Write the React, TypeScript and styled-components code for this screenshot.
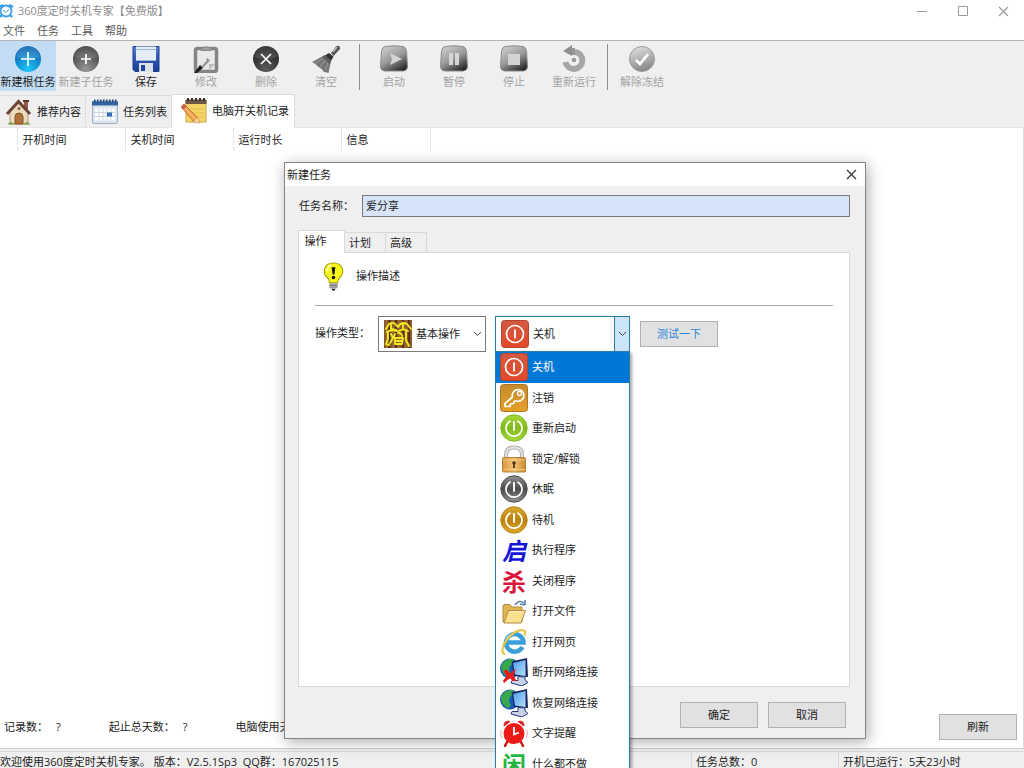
import React, { useState } from "react";
import styled, { createGlobalStyle, css } from "styled-components";

const GlobalStyle = createGlobalStyle`
  *, *::before, *::after { box-sizing: border-box; }
  body { margin: 0; background: #fff; }
  body, button, input, select {
    font-family: "Open Sans", "Noto Sans CJK SC", sans-serif;
    font-size: 11px;
    line-height: 18px;
    color: #1c1c1c;
  }
  button { padding: 0; border: 0; background: none; }
  svg { display: block; flex: none; }
`;

const Window = styled.div`
  position: relative;
  display: flex;
  flex-direction: column;
  height: 100vh;
  overflow: hidden;
  background: #fff;
`;

const TitleBar = styled.header`
  display: flex;
  align-items: center;
  justify-content: space-between;
  height: 22px;
`;

const AppTitle = styled.h1`
  display: flex;
  align-items: center;
  gap: 4px;
  margin: 0;
  font-size: 11px;
  font-weight: 400;
  color: #8c8c8c;
`;

const WindowButtons = styled.div`
  display: flex;
`;

const WindowButton = styled.button`
  display: grid;
  place-items: center;
  width: 41px;
  height: 22px;
`;

const MenuBar = styled.nav`
  display: flex;
  gap: 12px;
  height: 18px;
  padding-left: 3px;
`;

const MenuItem = styled.button`
  color: #5a5a5a;
`;

const Toolbar = styled.div`
  display: flex;
  height: 54px;
  border-top: 1px solid #b4b4b4;
  background: #efefef;
`;

const Tool = styled.button<{ $active?: boolean; $narrow?: boolean }>`
  display: flex;
  flex-direction: column;
  align-items: center;
  width: ${(p) => (p.$narrow ? 56 : 60)}px;
  height: 50px;
  padding-top: 4px;
  white-space: nowrap;
  background: ${(p) => (p.$active ? "#c1dcf3" : "transparent")};
  &:disabled { color: #a3a3a3; }
`;

const ToolDivider = styled.div`
  width: 1px;
  height: 46px;
  margin: 3px 4px 0 3px;
  background: #8f8f8f;
`;

const MainTabs = styled.div`
  display: flex;
  align-items: flex-end;
  height: 34px;
  background: #efefef;
  border-bottom: 1px solid #e6e6e6;
`;

const MainTab = styled.button<{ $active?: boolean }>`
  display: flex;
  align-items: center;
  gap: 4px;
  height: 32px;
  padding: 0 4px 0 5px;
  border-top: 1px solid #dcdcdc;
  border-right: 1px solid #dcdcdc;
  ${(p) =>
    p.$active &&
    css`
      height: 34px;
      margin-bottom: -1px;
      padding: 0 5px 2px 8px;
      background: #fff;
    `}
`;

const Records = styled.main`
  flex: 1;
  border-right: 1px solid #dcdcdc;
`;

const RecordTable = styled.table`
  border-collapse: collapse;
  table-layout: fixed;
  width: 430px;
  th {
    height: 23px;
    padding: 0 5px;
    border-right: 1px solid #e4e4e4;
    font-weight: 400;
    text-align: left;
  }
`;

const Summary = styled.footer`
  display: flex;
  align-items: center;
  height: 42px;
  padding: 0 6px 0 4px;
  border-right: 1px solid #dcdcdc;
`;

const Stat = styled.p`
  display: flex;
  gap: 8px;
  margin: 0 48px 0 0;
  white-space: nowrap;
`;

const PushButton = styled.button<{ $accent?: boolean }>`
  width: 78px;
  height: 26px;
  border: 1px solid #b1b1b1;
  background: #e1e1e1;
  color: ${(p) => (p.$accent ? "#2f86dc" : "#1c1c1c")};
`;

const RefreshButton = styled(PushButton)`
  margin-left: auto;
`;

const StatusBar = styled.div`
  display: grid;
  grid-template-columns: 691fr 147fr 186fr;
  height: 20px;
  border-top: 1px solid #cfcfcf;
  background: #efefef;
  white-space: nowrap;
`;

const StatusCell = styled.div`
  height: 24px;
  margin-top: 2px;
  padding: 1px 0 0 4px;
  border-top: 1px solid #dadada;
  border-left: 1px solid #dadada;
  &:first-child {
    padding-left: 0;
    border-left: 0;
  }
`;

const Dialog = styled.section`
  position: absolute;
  left: 284px;
  top: 162px;
  width: 582px;
  height: 577px;
  display: flex;
  flex-direction: column;
  border: 1px solid #858585;
  background: #efefef;
  box-shadow: 2px 3px 14px rgba(0, 0, 0, 0.32);
`;

const DialogTitle = styled.header`
  display: flex;
  align-items: center;
  justify-content: space-between;
  height: 23px;
  padding-left: 2px;
  background: #fff;
`;

const Caption = styled.h2`
  margin: 0;
  font-size: 11px;
  font-weight: 400;
`;

const DialogClose = styled.button`
  display: grid;
  place-items: center;
  width: 28px;
  height: 23px;
`;

const DialogBody = styled.div`
  display: flex;
  flex: 1;
  flex-direction: column;
  padding: 9px 15px 10px 13px;
`;

const NameRow = styled.div`
  display: flex;
  align-items: center;
  gap: 7px;
  padding-left: 1px;
  label { width: 56px; }
`;

const NameInput = styled.input`
  flex: 1;
  height: 22px;
  padding: 0 3px 2px;
  border: 1px solid #7a7a7a;
  border-radius: 0;
  background: #d7e4f7;
  outline: none;
`;

const DialogTabs = styled.div`
  display: flex;
  align-items: flex-end;
  height: 22px;
  margin-top: 13px;
`;

const DialogTab = styled.button<{ $active?: boolean }>`
  width: 41px;
  height: 20px;
  padding-right: 10px;
  border: solid #d9d9d9;
  border-width: 1px 1px 0 0;
  ${(p) =>
    p.$active &&
    css`
      position: relative;
      width: 47px;
      height: 23px;
      margin-bottom: -1px;
      padding: 0 12px 2px 0;
      border-left-width: 1px;
      background: #fff;
    `}
`;

const Panel = styled.div`
  flex: 1;
  padding: 9px 16px;
  border: 1px solid #d9d9d9;
  background: #fff;
`;

const Description = styled.div`
  display: flex;
  align-items: center;
  gap: 8px;
  height: 43px;
  padding: 0 0 15px 4px;
`;

const ActionRow = styled.div`
  display: flex;
  align-items: center;
  gap: 10px;
  padding-top: 10px;
  border-top: 1px solid #a5a5a5;
`;

const ActionLabel = styled.label`
  width: 53px;
  padding-bottom: 2px;
  white-space: nowrap;
`;

const Combo = styled.div<{ $open?: boolean }>`
  position: relative;
  display: flex;
  align-items: center;
  width: ${(p) => (p.$open ? 135 : 108)}px;
  height: 36px;
  padding-left: 5px;
  border: 1px solid ${(p) => (p.$open ? "#2b7da8" : "#7a7a7a")};
  background: #fff;
  & + & { margin-left: -1px; }
`;

const ComboSelect = styled.select`
  flex: 1;
  min-width: 0;
  height: 34px;
  padding: 0 0 0 4px;
  border: 0;
  background: transparent;
  appearance: none;
  outline: none;
`;

const ComboArrow = styled.span<{ $open?: boolean }>`
  display: grid;
  place-items: center;
  align-self: stretch;
  width: 15px;
  ${(p) => p.$open && "background: #cce4f7; border-left: 1px solid #2b7da8;"}
`;

const OptionList = styled.ul`
  position: absolute;
  z-index: 1;
  top: 34px;
  left: -1px;
  right: -1px;
  display: flex;
  flex-direction: column;
  height: 428px;
  margin: 0;
  padding: 0;
  border: 1px solid #2b7da8;
  border-bottom: 0;
  background: #fff;
  box-shadow: 2px 2px 3px rgba(0, 0, 0, 0.35);
  list-style: none;
`;

const Option = styled.li<{ $selected: boolean }>`
  display: flex;
  flex: 1;
  min-height: 0;
  align-items: center;
  gap: 4px;
  padding-left: 4px;
  white-space: nowrap;
  color: ${(p) => (p.$selected ? "#fff" : "#1c1c1c")};
  background: ${(p) => (p.$selected ? "#0078d7" : "transparent")};
`;

const GlyphIcon = styled.span<{ $color: string; $slanted?: boolean }>`
  width: 28px;
  font: 700 24px/26px "Noto Sans CJK SC", sans-serif;
  font-style: ${(p) => (p.$slanted ? "italic" : "normal")};
  text-align: center;
  color: ${(p) => p.$color};
`;

const DialogActions = styled.div`
  display: flex;
  justify-content: flex-end;
  gap: 10px;
  padding: 15px 4px 0 0;
`;

/* ---------- icons ---------- */

const Icon = ({ children, size = 28 }: { children: React.ReactNode; size?: number }) => (
  <svg width={size} height={size} viewBox="0 0 28 28" fill="none" aria-hidden="true">
    {children}
  </svg>
);

const Cross = ({ color }: { color: string }) => (
  <svg width="11" height="11" viewBox="0 0 11 11" aria-hidden="true">
    <path d="M1 1l9 9M10 1l-9 9" stroke={color} strokeWidth="1.2" />
  </svg>
);

const Chevron = () => (
  <svg width="9" height="6" viewBox="0 0 9 6" fill="none" aria-hidden="true">
    <path d="M1 1l3.5 3.5L8 1" stroke="#444" />
  </svg>
);

const AlarmLogo = () => (
  <svg width="14" height="16" viewBox="0 0 14 16" fill="none" aria-hidden="true">
    <path d="M0 4l3-2M9 2l4 2M2 12l-2 2M10 12l2 2" stroke="#2f9be8" strokeWidth="2.400" />
    <circle cx="6" cy="8" r="5.500" fill="#fff" stroke="#3ba2ea" strokeWidth="1.800" />
    <path d="M3 7l3 2.500L9 6" stroke="#4b9bd4" />
  </svg>
);

const RoundIcon = ({ id, from, to, mark }: { id: string; from: string; to: string; mark: string }) => (
  <Icon>
    <defs>
      <radialGradient id={id} cx=".5" cy=".9" r=".85">
        <stop stopColor={from} />
        <stop offset="1" stopColor={to} />
      </radialGradient>
    </defs>
    <circle cx="14" cy="14" r="13" fill={`url(#${id})`} />
    <path d="M2.500 12a11.500 11.500 0 0 1 23 0q-11.500 4-23 0z" fill="#fff" opacity=".13" />
    <path d={mark} stroke="#fff" strokeWidth="1.700" />
  </Icon>
);

const SaveIcon = () => (
  <Icon>
    <defs>
      <linearGradient id="save" x2="0" y2="1">
        <stop stopColor="#5a83d0" /><stop offset=".5" stopColor="#2c55b5" /><stop offset="1" stopColor="#1c3f93" />
      </linearGradient>
    </defs>
    <path d="M1 1.500h26v25H3l-2-2z" fill="url(#save)" stroke="#1d3f93" />
    <path d="M4 1.500h20V15H4z" fill="#e4edf5" />
    <path d="M4 4.500h20M4 15.500h20" stroke="#9fb6d0" />
    <path d="M7 18h14v9H7z" fill="#dde2e8" />
    <path d="M9 20h4v6H9z" fill="#1b459f" />
  </Icon>
);

const EditIcon = () => (
  <Icon>
    <rect x="3.500" y="3.500" width="21" height="23" rx="2" fill="#e9e9e9" stroke="#858585" strokeWidth="3.500" />
    <path d="M9 5.500V3h3q2-3 4 0h3v2.500z" fill="#a5a5a5" stroke="#858585" />
    <path d="M17 19h6l-6 6z" fill="#bbb" />
    <path d="M15.500 13l2.500 2.500-7 7.500-3-2.500z" fill="#999" />
    <path d="M14 15l-6 7" stroke="#f4f4f4" strokeWidth="1.300" />
    <path d="M8 20l3 3-6 5-3 0z" fill="#1c1c1c" />
  </Icon>
);

const BrushIcon = () => (
  <Icon>
    <path d="M19 8l5.500-7q4-1.500 3.500 3l-6.500 7z" fill="#555" />
    <path d="M25 2l-4 5" stroke="#bbb" strokeWidth="1.500" />
    <path d="M17 8l4.500 3.500L19 16l-7-5z" fill="#333" />
    <path d="M13 10l6 6-2.500 12q-3-1-4.500-1-3-4-6-5.500-2-2.500-6-4.500z" fill="#777" />
    <path d="M14 12L3 18M15 13L8 22M17 15l-4 11" stroke="#a0a0a0" strokeWidth=".8" />
    <path d="M13 10l6 6-1 3-8-7z" fill="#5b5b5b" />
  </Icon>
);

const MediaIcon = ({ mark }: { mark: string }) => (
  <Icon>
    <defs>
      <linearGradient id="media" x1=".2" x2=".8" y2="1">
        <stop stopColor="#cdcdcd" /><stop offset=".5" stopColor="#999" /><stop offset="1" stopColor="#222" />
      </linearGradient>
    </defs>
    <path d="M5 1.500q9-1.500 18 0 3 .5 3.500 5l1 15q0 4-4 4.500H4.500Q.500 25.500.500 21.500l1-15Q2 2 5 1.500z" fill="url(#media)" stroke="#8a8a8a" />
    <path d={mark} fill="#d4d4d4" />
  </Icon>
);

const RerunIcon = () => (
  <Icon>
    <path d="M15 7a8.500 8.500 0 1 1-9.500 10" stroke="#a6a6a6" strokeWidth="6" />
    <path d="M3 6l9-6v11z" fill="#8e8e8e" />
    <path d="M11 3h4v7h-4z" fill="#969696" />
    <circle cx="14" cy="15" r="2.300" fill="#999" />
  </Icon>
);

const ThawIcon = () => (
  <Icon>
    <defs>
      <linearGradient id="thaw" x2=".3" y2="1">
        <stop stopColor="#e6e6e6" /><stop offset="1" stopColor="#8b8b8b" />
      </linearGradient>
    </defs>
    <circle cx="14" cy="14" r="12.500" fill="url(#thaw)" stroke="#9a9a9a" />
    <path d="M8 15l4 4 8-10" stroke="#fff" strokeWidth="2.800" />
  </Icon>
);

const HomeIcon = () => (
  <Icon>
    <path d="M19 3h4v8h-4z" fill="#9c5a45" />
    <path d="M18 3h6" stroke="#5e3126" strokeWidth="2" />
    <path d="M5 14l8.500-9L23 14v12H5z" fill="#ecdcbf" stroke="#b59770" />
    <path d="M2 16L13.500 3.500 25 16" stroke="#6b4538" strokeWidth="3" />
    <path d="M10 26v-7a4 4 0 0 1 8 0v7z" fill="#b0703a" stroke="#80502a" />
    <circle cx="14" cy="10.500" r="1.500" fill="#8a5a45" />
    <path d="M3 26.500q3-4 6 0M19 26.500q3-4 6 0" fill="#7ea64f" stroke="#7ea64f" />
  </Icon>
);

const CalendarIcon = () => (
  <Icon>
    <rect x="1.500" y="3" width="25" height="22.500" rx="1.500" fill="#dce5ed" stroke="#9fb2c4" />
    <path d="M1 3.500h26v4H1z" fill="#31649e" />
    <path d="M3 3h23" stroke="#20497c" strokeWidth="3" strokeDasharray="1.500 1.500" />
    <path d="M4 10.500h20v12H4z" fill="#fff" />
    <path d="M4 14.500h20M4 18.500h20M8 10.500v12M12 10.500v12M16 10.500v12M20 10.500v12" stroke="#c8d5e1" />
    <path d="M16 14.500h5v4h-5z" fill="#356bb8" />
  </Icon>
);

const NoteIcon = () => (
  <Icon>
    <rect x="6" y="4" width="20" height="21" fill="#f3d566" stroke="#cda84b" />
    <path d="M5.500 2.500h21V7h-21z" fill="#6b5646" />
    <path d="M7 2.500h18" stroke="#3c332d" strokeWidth="3" strokeDasharray="2 2" />
    <path d="M9 12h15M9 16h15M9 20h15" stroke="#e3bf50" />
    <path d="M1 10l3-3 14 14 1.500 5-5.500-1z" fill="#f3a04a" stroke="#b06a30" strokeWidth=".7" />
    <path d="M1 10l3-3 2.500 2.500-3 3z" fill="#d55c54" />
    <path d="M15 23l3-2 1.500 5-5.500-1z" fill="#f2d4a5" />
    <path d="M5 11l10 11" stroke="#ffd38b" />
  </Icon>
);

const BulbIcon = () => (
  <Icon size={29}>
    <path d="M14 1C4 1 3.500 11 7.500 14.500q2.500 2 2.500 5.500h8q0-3.500 2.500-5.500C24.500 11 24 1 14 1z" fill="#f7f51a" stroke="#a0a000" />
    <path d="M8 9q0-5 4-6" stroke="#fffbc5" strokeWidth="1.500" />
    <path d="M12.200 5h3.600l-1 7h-1.600z" fill="#111" />
    <circle cx="14" cy="15" r="1.700" fill="#111" />
    <path d="M10 20.500h8V25h-8z" fill="#a5a5a5" />
    <path d="M10 22.500h8M11 25h6" stroke="#777" />
    <path d="M12.500 26h3v1.500h-3z" fill="#222" />
  </Icon>
);

const WoodIcon = () => (
  <Icon>
    <rect width="28" height="28" fill="#8a5a2c" />
    <path d="M5.500 0v28M12 0v28M19 0v28M25 0v28" stroke="#4c280f" strokeWidth="1.500" />
    <path d="M2.500 0v28M9 0v28M15 0v28M22 0v28" stroke="#a5713c" />
    <path
      d="M2 9l3-5q5-3 8 2M7 4v5l5 1M14 7q3-6 9-3l4 5M19 4v5M3 12q4-3 10-1M15 11q5-3 9 0M4 13v6l-2 5 3 1M7 14l2 4-3 5M22 12v8l3 6M11 14l-1 3M14 13q4 0 4 3M11 18h8l-1 6h-7zM11 21h7"
      stroke="#f0ea1f"
      strokeWidth="1.900"
      strokeLinecap="round"
      strokeLinejoin="round"
    />
  </Icon>
);

const ShutdownIcon = () => (
  <Icon>
    <defs>
      <linearGradient id="shutdown" x2="0" y2="1">
        <stop stopColor="#d25a42" /><stop offset="1" stopColor="#e2492a" />
      </linearGradient>
    </defs>
    <rect x=".5" y=".5" width="27" height="27" rx="3" fill="url(#shutdown)" stroke="#b5472f" />
    <circle cx="14" cy="14" r="8.500" stroke="#fff" strokeWidth="1.700" />
    <path d="M14 9.500v9" stroke="#fff" strokeWidth="1.800" />
  </Icon>
);

const KeyIcon = () => (
  <Icon>
    <defs>
      <linearGradient id="key" x2="0" y2="1">
        <stop stopColor="#c48a2d" /><stop offset="1" stopColor="#e6a028" />
      </linearGradient>
    </defs>
    <rect x=".5" y=".5" width="27" height="27" rx="3" fill="url(#key)" stroke="#b1761c" />
    <path d="M12.500 13a5.800 5.800 0 1 1 4 4l-2 0-1 2.500-3 .5-.5 2.500H5v-3z" stroke="#fff" strokeWidth="1.700" strokeLinejoin="round" />
    <circle cx="19.500" cy="9.500" r="2" stroke="#fff" strokeWidth="1.300" />
  </Icon>
);

const PowerIcon = ({ id, light, dark }: { id: string; light: string; dark: string }) => (
  <Icon>
    <defs>
      <linearGradient id={id} x2="0" y2="1">
        <stop stopColor={light} /><stop offset=".5" stopColor={dark} /><stop offset="1" stopColor={light} />
      </linearGradient>
    </defs>
    <circle cx="14" cy="14" r="13.200" fill={`url(#${id})`} stroke={dark} />
    <path d="M10 7.200a8 8 0 1 0 8 0" stroke="#fff" strokeWidth="1.700" strokeLinecap="round" />
    <path d="M14 8v8" stroke="#fff" strokeWidth="1.900" strokeLinecap="round" />
  </Icon>
);

const LockIcon = () => (
  <Icon>
    <defs>
      <linearGradient id="lock" x2="1">
        <stop stopColor="#d4953c" /><stop offset=".5" stopColor="#f5c678" /><stop offset="1" stopColor="#cc8a34" />
      </linearGradient>
    </defs>
    <path d="M6 15V9.500q0-7 8-7t8 7V15" stroke="#b0b0b0" strokeWidth="4" />
    <path d="M6 15V9.500q0-7 8-7t8 7V15" stroke="#e5e5e5" strokeWidth="1.800" />
    <rect x="2.500" y="12.500" width="23" height="14.500" rx="1" fill="url(#lock)" stroke="#b98138" />
    <path d="M3 15h22M3 24.500h22" stroke="#f1c77c" />
    <circle cx="14" cy="18" r="1.800" fill="#553619" />
    <path d="M13.300 18h1.400l.3 5h-2z" fill="#553619" />
  </Icon>
);

const FolderIcon = () => (
  <Icon>
    <path d="M3 9.500l1-2h6l2 2.500h10v15H3z" fill="#e1b651" stroke="#a8894f" />
    <path d="M8.500 13.500h17L21 26H4z" fill="#fbe08f" stroke="#b28a42" />
    <path d="M9.500 14.500h14" stroke="#fff1bd" />
    <path d="M15 8q4-6 9-2M25 8V3M25 8l-5-1" stroke="#5b7fa5" strokeWidth="1.500" />
  </Icon>
);

const BrowserIcon = () => (
  <Icon>
    <path d="M22.500 19a8.800 8.800 0 1 1 1-4.500H8" stroke="#3a9fd9" strokeWidth="4.500" />
    <path d="M6 12q2-6 8-6" stroke="#8fd2f3" strokeWidth="1.800" />
    <path d="M5 26.500c-9-4 8-28 19-24 2 1 1 4 0 5" stroke="#e8c64c" strokeWidth="2.200" />
  </Icon>
);

const NetworkIcon = ({ broken }: { broken?: boolean }) => (
  <Icon>
    <defs>
      <linearGradient id="screen" x2="1" y2="1">
        <stop stopColor="#4b9cec" /><stop offset="1" stopColor="#b8e0fb" />
      </linearGradient>
    </defs>
    <circle cx="10" cy="10.500" r="10" fill="#1758ba" />
    <path d="M1 8Q5 0 13 1q1 5-3 7-2 4 1 8-3 5-5 2Q1 15 1 8z" fill="#38a84c" />
    <path d="M11.500 3.500L27 0l1 19-14-1z" fill="#16245f" />
    <path d="M13 5l12.500-3v16L15 16.500z" fill="url(#screen)" />
    <path d="M18 18.500l7 .5v3l3 2.500-6 3.500-11-3 1-2.500 6 0z" fill="#c8d2e6" stroke="#263a78" />
    {broken && <path d="M3 13l4-1.500 3 4 6-5-2.500 7 3 5.500-4 0-2.500-3-6 5-1-2 3.500-5z" fill="#e51c19" />}
  </Icon>
);

const AlarmIcon = () => (
  <Icon>
    <path d="M7 23l-2 4M21 23l2 4" stroke="#d51614" strokeWidth="2.500" strokeLinecap="round" />
    <path d="M4 7Q4 1 10 2.500zM18 2.500Q24 1 24 7z" fill="#e01b18" stroke="#e01b18" />
    <circle cx="14" cy="14.500" r="10.500" fill="#ed1b18" />
    <path d="M14 8v7.500l5-2" stroke="#fff" strokeWidth="1.800" />
    <path d="M1 11q-1 5 1 8M27 11q1 5-1 8" stroke="#e7a7a5" />
  </Icon>
);

/* ---------- data ---------- */

const firstTools = [
  {
    label: "新建根任务",
    active: true,
    icon: <RoundIcon id="addRoot" from="#1cc8fa" to="#0a5fae" mark="M14 7v14M7 14h14" />,
  },
  {
    label: "新建子任务",
    disabled: true,
    icon: <RoundIcon id="addChild" from="#999" to="#3a3a3a" mark="M14 9v10M9 14h10" />,
  },
  { label: "保存", icon: <SaveIcon /> },
  { label: "修改", disabled: true, icon: <EditIcon /> },
  {
    label: "删除",
    disabled: true,
    icon: <RoundIcon id="remove" from="#5c5c5c" to="#1e1e1e" mark="M9 9l10 10M19 9L9 19" />,
  },
  { label: "清空", disabled: true, icon: <BrushIcon /> },
];

const runTools = [
  { label: "启动", icon: <MediaIcon mark="M10 8l12 6-12 6 2-6z" /> },
  { label: "暂停", icon: <MediaIcon mark="M9 8h4v12H9zM15 8h4v12h-4z" /> },
  { label: "停止", icon: <MediaIcon mark="M8 9h12v11H8z" /> },
  { label: "重新运行", icon: <RerunIcon /> },
];

const actions = [
  { label: "关机", icon: <ShutdownIcon /> },
  { label: "注销", icon: <KeyIcon /> },
  { label: "重新启动", icon: <PowerIcon id="restart" light="#a8d83c" dark="#7dba1a" /> },
  { label: "锁定/解锁", icon: <LockIcon /> },
  { label: "休眠", icon: <PowerIcon id="sleep" light="#929292" dark="#4b4b4b" /> },
  { label: "待机", icon: <PowerIcon id="standby" light="#dfa82e" dark="#b8820e" /> },
  { label: "执行程序", icon: <GlyphIcon $color="#1517d8" $slanted>启</GlyphIcon> },
  { label: "关闭程序", icon: <GlyphIcon $color="#d9163b">杀</GlyphIcon> },
  { label: "打开文件", icon: <FolderIcon /> },
  { label: "打开网页", icon: <BrowserIcon /> },
  { label: "断开网络连接", icon: <NetworkIcon broken /> },
  { label: "恢复网络连接", icon: <NetworkIcon /> },
  { label: "文字提醒", icon: <AlarmIcon /> },
  { label: "什么都不做", icon: <GlyphIcon $color="#25b545">闲</GlyphIcon> },
];

export default function App() {
  const [name, setName] = useState("爱分享");
  const [action, setAction] = useState("关机");
  const current = actions.find((a) => a.label === action) ?? actions[0];

  return (
    <>
      <GlobalStyle />
      <Window>
        <TitleBar>
          <AppTitle>
            <AlarmLogo />
            360度定时关机专家【免费版】
          </AppTitle>
          <WindowButtons>
            <WindowButton aria-label="最小化">
              <svg width="10" height="11" viewBox="0 0 10 11"><path d="M0 5.500h10" stroke="#999" /></svg>
            </WindowButton>
            <WindowButton aria-label="最大化">
              <svg width="10" height="10" viewBox="0 0 10 10" fill="none"><path d="M.5.500h9v9h-9z" stroke="#999" /></svg>
            </WindowButton>
            <WindowButton aria-label="关闭">
              <Cross color="#999" />
            </WindowButton>
          </WindowButtons>
        </TitleBar>

        <MenuBar>
          {["文件", "任务", "工具", "帮助"].map((m) => (
            <MenuItem key={m}>{m}</MenuItem>
          ))}
        </MenuBar>

        <Toolbar>
          {firstTools.map((t, i) => (
            <Tool key={t.label} $active={t.active} $narrow={i === 0} disabled={t.disabled}>
              {t.icon}
              {t.label}
            </Tool>
          ))}
          <ToolDivider />
          {runTools.map((t) => (
            <Tool key={t.label} disabled>
              {t.icon}
              {t.label}
            </Tool>
          ))}
          <ToolDivider />
          <Tool disabled>
            <ThawIcon />
            解除冻结
          </Tool>
        </Toolbar>

        <MainTabs role="tablist">
          <MainTab role="tab"><HomeIcon />推荐内容</MainTab>
          <MainTab role="tab"><CalendarIcon />任务列表</MainTab>
          <MainTab role="tab" aria-selected $active><NoteIcon />电脑开关机记录</MainTab>
        </MainTabs>

        <Records>
          <RecordTable>
            <colgroup>
              <col width="17" />
              <col width="108" />
              <col width="108" />
              <col width="108" />
              <col width="89" />
            </colgroup>
            <thead>
              <tr>
                <th aria-label="序号" />
                <th>开机时间</th>
                <th>关机时间</th>
                <th>运行时长</th>
                <th>信息</th>
              </tr>
            </thead>
          </RecordTable>
        </Records>

        <Summary>
          <Stat><span>记录数：</span><span>?</span></Stat>
          <Stat><span>起止总天数：</span><span>?</span></Stat>
          <Stat><span>电脑使用天数：</span></Stat>
          <RefreshButton>刷新</RefreshButton>
        </Summary>

        <StatusBar>
          <StatusCell>欢迎使用360度定时关机专家。 版本：V2.5.1Sp3&nbsp; QQ群：167025115</StatusCell>
          <StatusCell>任务总数：0</StatusCell>
          <StatusCell>开机已运行：5天23小时</StatusCell>
        </StatusBar>

        <Dialog role="dialog" aria-labelledby="dialog-title">
          <DialogTitle>
            <Caption id="dialog-title">新建任务</Caption>
            <DialogClose aria-label="关闭"><Cross color="#333" /></DialogClose>
          </DialogTitle>
          <DialogBody>
            <NameRow>
              <label htmlFor="task-name">任务名称：</label>
              <NameInput id="task-name" value={name} onChange={(e) => setName(e.target.value)} />
            </NameRow>
            <DialogTabs role="tablist">
              <DialogTab role="tab" aria-selected $active>操作</DialogTab>
              <DialogTab role="tab">计划</DialogTab>
              <DialogTab role="tab">高级</DialogTab>
            </DialogTabs>
            <Panel role="tabpanel">
              <Description>
                <BulbIcon />
                操作描述
              </Description>
              <ActionRow>
                <ActionLabel htmlFor="action-kind">操作类型：</ActionLabel>
                <Combo>
                  <WoodIcon />
                  <ComboSelect id="action-kind">
                    <option>基本操作</option>
                  </ComboSelect>
                  <ComboArrow><Chevron /></ComboArrow>
                </Combo>
                <Combo $open>
                  {current.icon}
                  <ComboSelect aria-label="操作" value={action} onChange={(e) => setAction(e.target.value)}>
                    {actions.map((a) => (
                      <option key={a.label}>{a.label}</option>
                    ))}
                  </ComboSelect>
                  <ComboArrow $open><Chevron /></ComboArrow>
                  <OptionList role="listbox" aria-label="操作">
                    {actions.map((a) => (
                      <Option
                        key={a.label}
                        role="option"
                        aria-selected={a.label === action}
                        $selected={a.label === action}
                        onClick={() => setAction(a.label)}
                      >
                        {a.icon}
                        {a.label}
                      </Option>
                    ))}
                  </OptionList>
                </Combo>
                <PushButton $accent>测试一下</PushButton>
              </ActionRow>
            </Panel>
            <DialogActions>
              <PushButton>确定</PushButton>
              <PushButton>取消</PushButton>
            </DialogActions>
          </DialogBody>
        </Dialog>
      </Window>
    </>
  );
}
